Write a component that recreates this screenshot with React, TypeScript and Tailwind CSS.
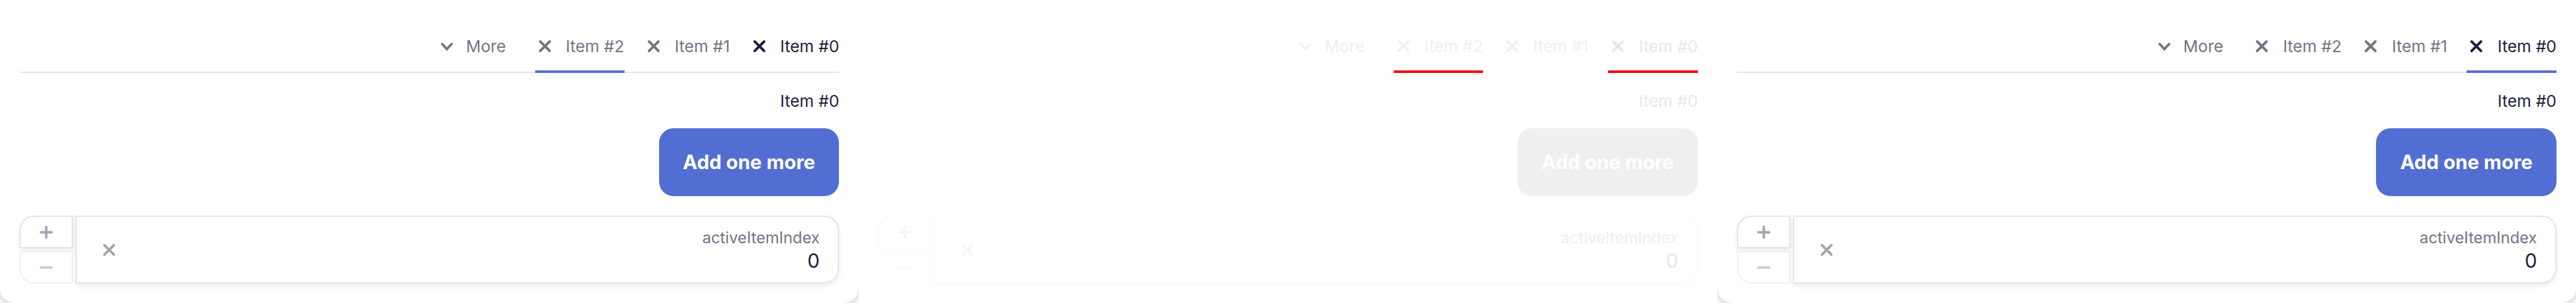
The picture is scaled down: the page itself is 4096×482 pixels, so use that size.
import { useId } from 'react';

type Tone = {
  strong: string;
  muted: string;
  icon: string;
  iconFaint: string;
  marker: string;
  line: string;
  button: string;
  frame: string;
  frameFaint: string;
  lift: string;
  card: string;
};

const live: Tone = {
  strong: 'text-[#1b1f3b]',
  muted: 'text-[#717585]',
  icon: 'text-[#a5a5b1]',
  iconFaint: 'text-[#cacad0]',
  marker: 'bg-[#526ed3]',
  line: 'bg-[#e4e4e4]',
  button: 'bg-[#526ed3]',
  frame: 'border-[#e4e4e4]',
  frameFaint: 'border-[#efefef]',
  lift: 'shadow-[0_4px_8px_rgba(0,0,0,0.08)]',
  card: 'shadow-[0_4px_16px_rgba(0,0,0,0.2)]',
};

const ghost: Tone = {
  strong: 'text-[#e8e8e8]',
  muted: 'text-[#f0f0f0]',
  icon: 'text-[#f5f5f5]',
  iconFaint: 'text-[#f9f9f9]',
  marker: 'bg-[#ff0000]',
  line: 'bg-[#fcfcfc]',
  button: 'bg-[#efefef]',
  frame: 'border-[#fbfbfb]',
  frameFaint: 'border-[#fdfdfd]',
  lift: 'shadow-[0_4px_8px_rgba(0,0,0,0.01)]',
  card: 'shadow-[0_4px_16px_rgba(0,0,0,0.02)]',
};

const iconPaths = {
  cross: 'M8 8l15 15M23 8l-15 15',
  chevron: 'M8 12l7.5 8l7.5-8',
  plus: 'M15.5 7v17M7 15.5h17',
  minus: 'M7 15.5h17',
};

function Icon({ name }: { name: keyof typeof iconPaths }) {
  return (
    <svg
      viewBox="0 0 31 31"
      className="block size-[31px] shrink-0"
      fill="none"
      stroke="currentColor"
      strokeWidth="4"
      strokeLinecap="round"
      aria-hidden="true"
    >
      <path d={iconPaths[name]} />
    </svg>
  );
}

function Tab({ index, current, marked, tone }: { index: number; current: boolean; marked: boolean; tone: Tone }) {
  return (
    <div className={`relative flex items-center gap-[18px] ${current ? tone.strong : tone.muted}`}>
      <button type="button" aria-label={`Close Item #${index}`}>
        <Icon name="cross" />
      </button>
      <button type="button" className="whitespace-nowrap">
        Item #{index}
      </button>
      {marked && <span className={`absolute inset-x-0 bottom-0 h-1 ${tone.marker}`} />}
    </div>
  );
}

function Panel({ tone, marked }: { tone: Tone; marked: number[] }) {
  const id = useId();
  return (
    <section className="overflow-hidden bg-white">
      <div className={`rounded-b-[23px] bg-white p-[31px] ${tone.card}`}>
        <nav className="relative flex h-[85px] justify-end gap-[31px] text-[26px] leading-[30px]">
          <span className={`absolute inset-x-0 bottom-0 h-0.5 ${tone.line}`} />
          <button type="button" className={`mr-[15px] flex items-center gap-[15px] ${tone.muted}`}>
            <Icon name="chevron" />
            More
          </button>
          {[2, 1, 0].map((index) => (
            <Tab key={index} index={index} current={index === 0} marked={marked.includes(index)} tone={tone} />
          ))}
        </nav>

        <p className={`mt-[30px] text-right text-[26px] leading-[30px] ${tone.strong}`}>Item #0</p>

        <div className="mt-[28px] flex justify-end">
          <button
            type="button"
            className={`h-[108px] rounded-[23px] px-[38px] text-[31px] font-bold text-white ${tone.button}`}
          >
            Add one more
          </button>
        </div>

        <div className="mt-[31px] flex h-[108px] gap-1">
          <div className="flex w-[85px] shrink-0 flex-col gap-1">
            <button
              type="button"
              aria-label="Increase"
              className={`flex flex-1 items-center justify-center rounded-tl-[23px] border-2 bg-white ${tone.frame} ${tone.lift} ${tone.icon}`}
            >
              <Icon name="plus" />
            </button>
            <button
              type="button"
              aria-label="Decrease"
              className={`flex flex-1 items-center justify-center rounded-bl-[23px] border-2 ${tone.frameFaint} ${tone.iconFaint}`}
            >
              <Icon name="minus" />
            </button>
          </div>
          <div
            className={`flex min-w-0 flex-1 items-center rounded-r-[23px] border-2 bg-white pr-[29px] pl-[36px] ${tone.frame} ${tone.lift}`}
          >
            <button type="button" aria-label="Clear" className={tone.icon}>
              <Icon name="cross" />
            </button>
            <div className="flex min-w-0 flex-1 flex-col text-right">
              <label htmlFor={id} className={`text-[25px] leading-[36px] ${tone.muted}`}>
                activeItemIndex
              </label>
              <input
                id={id}
                type="text"
                inputMode="numeric"
                defaultValue="0"
                className={`w-full bg-transparent text-right text-[31px] leading-[38px] outline-none ${tone.strong}`}
              />
            </div>
          </div>
        </div>
      </div>
    </section>
  );
}

export default function App() {
  return (
    <main className="grid grid-cols-3 bg-white font-['Inter',sans-serif]">
      <Panel tone={live} marked={[2]} />
      <Panel tone={ghost} marked={[2, 0]} />
      <Panel tone={live} marked={[0]} />
    </main>
  );
}
